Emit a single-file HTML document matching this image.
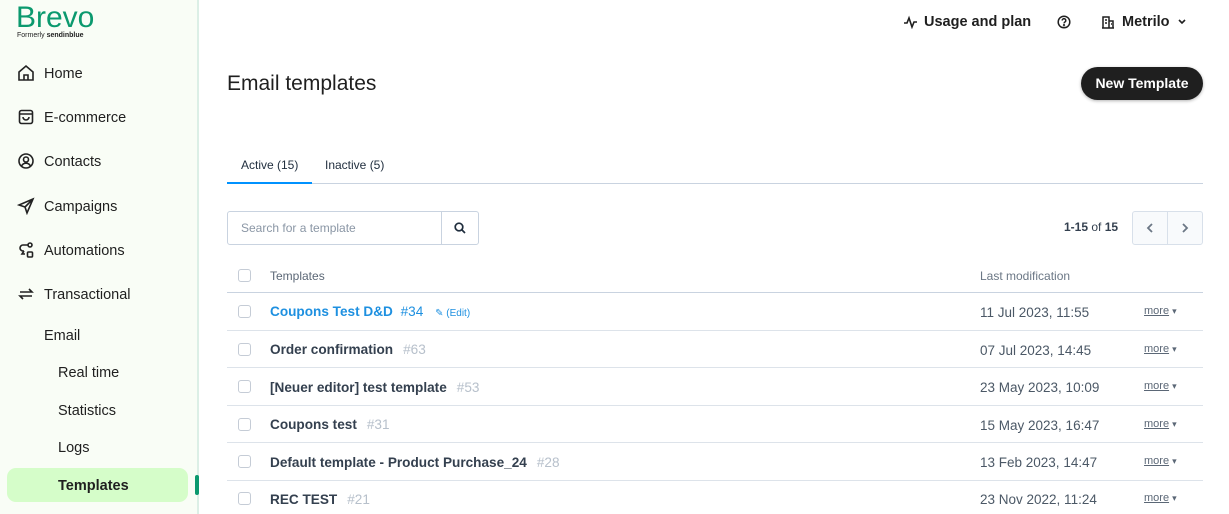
<!DOCTYPE html>
<html><head><meta charset="utf-8"><style>
*{box-sizing:border-box;margin:0;padding:0}
body{width:1229px;height:514px;overflow:hidden;background:#fff;font-family:"Liberation Sans",Arial,sans-serif;color:#1f2d3d;position:relative}
.side{position:absolute;left:0;top:0;width:199px;height:514px;background:#f9fdf6;border-right:2px solid #dcefe6}
.logo{position:absolute;left:16px;top:1px;font-size:30px;color:#0b996e;letter-spacing:0px}
.sub{position:absolute;left:17px;top:32px;font-size:7px;color:#222}
.nav{position:absolute;left:44px;font-size:14.5px;color:#1f1f1f;margin-top:1px}
.ic{position:absolute;left:17px;width:18px;height:18px}
.sel{position:absolute;left:7px;top:468px;width:181px;height:34px;background:#d5fdc9;border-radius:9px}
.top{position:absolute;top:14px;font-size:14.5px;font-weight:bold;color:#1f1f1f}
h1{position:absolute;left:227px;top:72px;font-size:21px;font-weight:normal;color:#1f1f1f}
.btn{position:absolute;left:1081px;top:67px;width:122px;height:33px;background:#1f1f1f;color:#fff;border-radius:17px;font-size:14px;font-weight:bold;text-align:center;line-height:33px;box-shadow:0 1px 3px rgba(0,0,0,.3)}
.tabs{position:absolute;left:227px;top:183px;width:976px;border-top:1px solid #c9d3e0}
.tab{position:absolute;top:158px;font-size:12px;color:#1f2d3d}
.search{position:absolute;left:227px;top:211px;width:252px;height:34px;border:1px solid #c9d3e0;border-radius:3px}
.search span{position:absolute;left:13px;top:9px;font-size:12px;color:#8a96a5}
.search i{position:absolute;left:213px;top:0;width:1px;height:32px;background:#c9d3e0}
.pg{position:absolute;left:1132px;top:211px;width:71px;height:34px;border:1px solid #d8e0ea;border-radius:3px;background:#f8fafc}
.cb{position:absolute;left:238px;width:13px;height:13px;border:1px solid #c5ccd6;border-radius:3px;background:#fff}
.line{position:absolute;left:227px;width:976px;border-top:1px solid #dde3ea}
.name{position:absolute;left:270px;font-size:13.6px;font-weight:bold;color:#34404f;margin-top:1px}
.id{font-weight:normal;color:#b7c0cb;margin-left:10px}
.date{position:absolute;left:980px;font-size:13.5px;color:#4b5866;margin-top:1px}
.more{position:absolute;left:1144px;font-size:11px;color:#5b6776;text-decoration:underline}
.more:after{content:" ▾";font-size:9px;text-decoration:none;display:inline-block;margin-left:3px}
</style></head><body>
<div class="side">
<div class="logo">Brevo</div>
<div class="sub">Formerly <b>sendinblue</b></div>
<svg class="ic" style="top:64px" viewBox="0 0 18 18" fill="none" stroke="#222" stroke-width="1.6"><path d="M2 8L9 2l7 6v8H2z M7 16v-5h4v5"/></svg>
<div class="nav" style="top:65px">Home</div>
<svg class="ic" style="top:108px" viewBox="0 0 18 18" fill="none" stroke="#222" stroke-width="1.6"><rect x="2.5" y="2.5" width="13" height="13" rx="2"/><path d="M2.5 6h13M6 9a3 3 0 006 0"/></svg>
<div class="nav" style="top:109px">E-commerce</div>
<svg class="ic" style="top:152px" viewBox="0 0 18 18" fill="none" stroke="#222" stroke-width="1.6"><circle cx="9" cy="9" r="7"/><circle cx="9" cy="7.5" r="2.5"/><path d="M4.5 14a5 5 0 019 0"/></svg>
<div class="nav" style="top:153px">Contacts</div>
<svg class="ic" style="top:197px" viewBox="0 0 18 18" fill="none" stroke="#222" stroke-width="1.6"><path d="M16 2L2 8l6 2 2 6z M8 10l8-8"/></svg>
<div class="nav" style="top:198px">Campaigns</div>
<svg class="ic" style="top:241px" viewBox="0 0 18 18" fill="none" stroke="#222" stroke-width="1.6"><circle cx="13" cy="4" r="2"/><rect x="10.5" y="11" width="5" height="5" rx="1"/><path d="M11 4H6a3 3 0 000 6h1M7 10l-2 3h3"/></svg>
<div class="nav" style="top:242px">Automations</div>
<svg class="ic" style="top:285px" viewBox="0 0 18 18" fill="none" stroke="#222" stroke-width="1.6"><path d="M3 7h12l-3-3M15 11H3l3 3"/></svg>
<div class="nav" style="top:286px">Transactional</div>
<div class="nav" style="top:327px">Email</div>
<div class="nav" style="top:364px;left:58px">Real time</div>
<div class="nav" style="top:402px;left:58px">Statistics</div>
<div class="nav" style="top:439px;left:58px">Logs</div>
<div class="sel"></div>
<div class="nav" style="top:477px;left:58px;font-weight:bold">Templates</div>
<div style="position:absolute;left:195px;top:475px;width:4px;height:20px;background:#0b996e;border-radius:2px"></div>
</div>

<svg style="position:absolute;left:903px;top:15px" width="15" height="14" viewBox="0 0 15 14" fill="none" stroke="#1f1f1f" stroke-width="1.6"><path d="M1 8h3l2-5 3 9 2-5h3"/></svg>
<div class="top" style="left:924px">Usage and plan</div>
<svg style="position:absolute;left:1057px;top:15px" width="14" height="14" viewBox="0 0 14 14" fill="none" stroke="#1f1f1f" stroke-width="1.5"><circle cx="7" cy="7" r="5.8"/><path d="M5.2 5.5a1.8 1.8 0 113 1.3c-.8.5-1.2.8-1.2 1.6"/><circle cx="7" cy="10.2" r=".4"/></svg>
<svg style="position:absolute;left:1101px;top:15px" width="14" height="14" viewBox="0 0 14 14" fill="none" stroke="#1f1f1f" stroke-width="1.5"><path d="M1 13h12M2 13V2h6v11M8 6h4v7M4 5h2M4 8h2M10 9h1"/></svg>
<div class="top" style="left:1122px">Metrilo</div>
<svg style="position:absolute;left:1177px;top:18px" width="10" height="8" viewBox="0 0 10 8" fill="none" stroke="#1f1f1f" stroke-width="1.6"><path d="M2 2l3 3 3-3"/></svg>

<h1>Email templates</h1>
<div class="btn">New Template</div>

<div class="tab" style="left:241px">Active (15)</div>
<div class="tab" style="left:325px">Inactive (5)</div>
<div class="tabs"></div>
<div style="position:absolute;left:227px;top:182px;width:85px;height:2px;background:#0092ff"></div>

<div class="search"><span>Search for a template</span><i></i>
<svg style="position:absolute;left:226px;top:10px" width="12" height="12" viewBox="0 0 12 12" fill="none" stroke="#1f2d3d" stroke-width="1.7"><circle cx="5" cy="5" r="3.8"/><path d="M8 8l3 3"/></svg></div>

<div style="position:absolute;left:1064px;top:220px;font-size:12px;color:#34404f"><b>1-15</b> of <b>15</b></div>
<div class="pg"><div style="position:absolute;left:34px;top:0;width:1px;height:32px;background:#d8e0ea"></div>
<svg style="position:absolute;left:12px;top:10px" width="10" height="12" viewBox="0 0 10 12" fill="none" stroke="#6b7785" stroke-width="1.8"><path d="M7 2L3 6l4 4"/></svg>
<svg style="position:absolute;left:47px;top:10px" width="10" height="12" viewBox="0 0 10 12" fill="none" stroke="#6b7785" stroke-width="1.8"><path d="M3 2l4 4-4 4"/></svg></div>

<div class="cb" style="top:269px"></div>
<div style="position:absolute;left:270px;top:269px;font-size:12px;color:#5b6776">Templates</div>
<div style="position:absolute;left:980px;top:269px;font-size:12px;color:#6b7785">Last modification</div>
<div class="line" style="top:292px;border-color:#c9d3e0"></div>

<div class="cb" style="top:305px"></div>
<div class="name" style="top:303px;color:#1e90e0">Coupons Test D&amp;D <span style="font-weight:normal;color:#1e90e0;margin-left:4px">#34</span> <span style="font-weight:normal;font-size:10px;margin-left:8px">✎ (Edit)</span></div>
<div class="date" style="top:304px">11 Jul 2023, 11:55</div><div class="more" style="top:305px">more</div>
<div class="line" style="top:330px"></div>

<div class="cb" style="top:343px"></div>
<div class="name" style="top:341px">Order confirmation<span class="id">#63</span></div>
<div class="date" style="top:342px">07 Jul 2023, 14:45</div><div class="more" style="top:343px">more</div>
<div class="line" style="top:367px"></div>

<div class="cb" style="top:380px"></div>
<div class="name" style="top:379px">[Neuer editor] test template<span class="id">#53</span></div>
<div class="date" style="top:379px">23 May 2023, 10:09</div><div class="more" style="top:380px">more</div>
<div class="line" style="top:405px"></div>

<div class="cb" style="top:418px"></div>
<div class="name" style="top:416px">Coupons test<span class="id">#31</span></div>
<div class="date" style="top:417px">15 May 2023, 16:47</div><div class="more" style="top:418px">more</div>
<div class="line" style="top:442px"></div>

<div class="cb" style="top:455px"></div>
<div class="name" style="top:454px">Default template - Product Purchase_24<span class="id">#28</span></div>
<div class="date" style="top:454px">13 Feb 2023, 14:47</div><div class="more" style="top:455px">more</div>
<div class="line" style="top:480px"></div>

<div class="cb" style="top:492px"></div>
<div class="name" style="top:491px">REC TEST<span class="id">#21</span></div>
<div class="date" style="top:491px">23 Nov 2022, 11:24</div><div class="more" style="top:492px">more</div>
</body></html>
